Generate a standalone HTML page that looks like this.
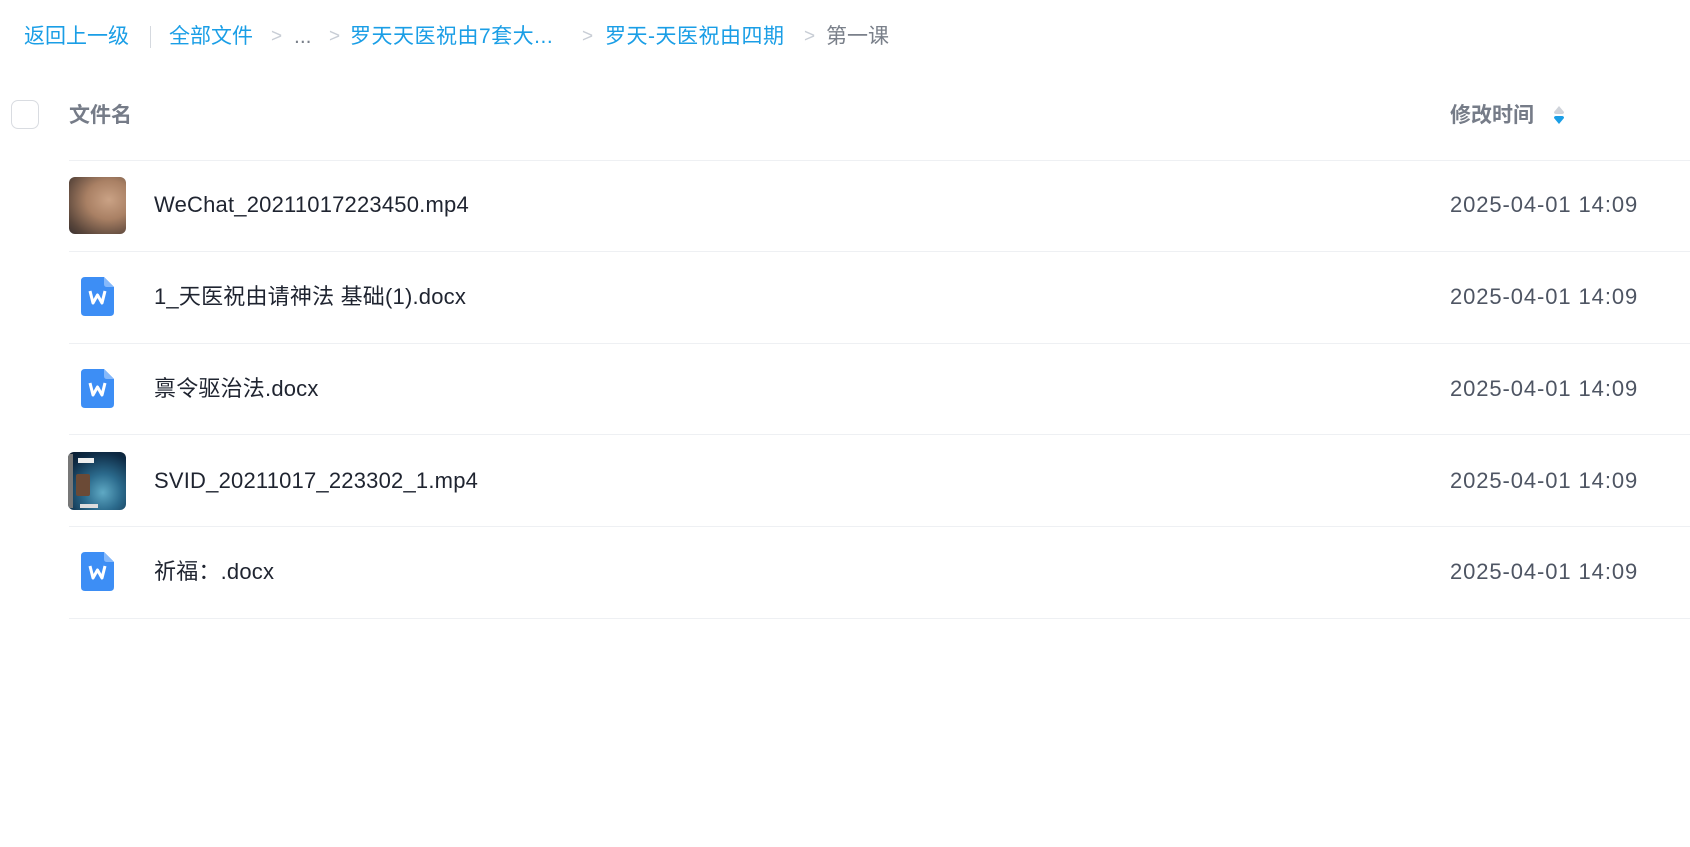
<!DOCTYPE html>
<html><head><meta charset="utf-8"><style>
*{margin:0;padding:0;box-sizing:border-box}
body{width:1690px;height:847px;background:#fff;font-family:"Liberation Sans","Noto Sans CJK SC",sans-serif;position:relative;overflow:hidden}
.a{position:absolute;white-space:nowrap}
.bc{top:23px;font-size:21px;line-height:28px;color:#1a9ee6}
.gt{color:#c8cdd5;font-size:19px}
.hd{font-size:21px;font-weight:bold;color:#767c88;top:103px;line-height:26px}
.line{position:absolute;left:69px;right:0;height:1px;background:#eef0f3}
.nm{left:154px;font-size:22px;letter-spacing:0.2px;color:#1f2430;line-height:28px}
.dt{left:1450px;font-size:22px;letter-spacing:0.9px;color:#4e5563;line-height:28px}
.doc{position:absolute;left:81px;width:33px;height:39px}
</style></head><body>
<div class="a bc" style="left:24px">返回上一级</div>
<div class="a" style="left:150px;top:26px;width:1px;height:22px;background:#d5d9df"></div>
<div class="a bc" style="left:169px">全部文件</div>
<div class="a bc gt" style="left:271px">&gt;</div>
<div class="a bc" style="left:294px;color:#7a808a">...</div>
<div class="a bc gt" style="left:329px">&gt;</div>
<div class="a bc" style="left:350px;letter-spacing:0.5px">罗天天医祝由7套大...</div>
<div class="a bc gt" style="left:582px">&gt;</div>
<div class="a bc" style="left:605px;letter-spacing:0.5px">罗天-天医祝由四期</div>
<div class="a bc gt" style="left:804px">&gt;</div>
<div class="a bc" style="left:826px;color:#7a808a">第一课</div>

<div class="a" style="left:11px;top:100px;width:28px;height:29px;border:1.5px solid #d9dce1;border-radius:7px"></div>
<div class="a hd" style="left:69px">文件名</div>
<div class="a hd" style="left:1450px">修改时间</div>
<svg class="a" style="left:1553px;top:104px" width="12" height="22" viewBox="0 0 12 22"><path d="M6 2 L11 8 Q11 10 9 10 L3 10 Q1 10 1 8 Z" fill="#cfd3da"/><path d="M6 20 L11 14 Q11 12 9 12 L3 12 Q1 12 1 14 Z" fill="#1a9ee6"/></svg>

<div class="line" style="top:160px"></div>
<div class="line" style="top:251px"></div>
<div class="line" style="top:343px"></div>
<div class="line" style="top:434px"></div>
<div class="line" style="top:526px"></div>
<div class="line" style="top:618px"></div>

<div class="a" style="left:69px;top:177px;width:57px;height:57px;border-radius:6px;background:radial-gradient(ellipse at 70% 40%,#caa285 0%,#a98064 40%,#5a463b 80%,#3a3130 100%)"></div>
<div class="a nm" style="top:191px">WeChat_20211017223450.mp4</div>
<div class="a dt" style="top:191px">2025-04-01 14:09</div>

<svg class="doc" style="top:277px" viewBox="0 0 33 39"><path d="M4 0 H23 L33 10 V35 Q33 39 29 39 H4 Q0 39 0 35 V4 Q0 0 4 0 Z" fill="#3d8ef5"/><path d="M23 0 L33 10 H26 Q23 10 23 7 Z" fill="#86b9fb"/><path d="M9 14 L12 26 L16.5 18 L21 26 L24 14" fill="none" stroke="#fff" stroke-width="3" stroke-linejoin="round"/></svg>
<div class="a nm" style="top:283px">1_天医祝由请神法 基础(1).docx</div>
<div class="a dt" style="top:283px">2025-04-01 14:09</div>

<svg class="doc" style="top:369px" viewBox="0 0 33 39"><path d="M4 0 H23 L33 10 V35 Q33 39 29 39 H4 Q0 39 0 35 V4 Q0 0 4 0 Z" fill="#3d8ef5"/><path d="M23 0 L33 10 H26 Q23 10 23 7 Z" fill="#86b9fb"/><path d="M9 14 L12 26 L16.5 18 L21 26 L24 14" fill="none" stroke="#fff" stroke-width="3" stroke-linejoin="round"/></svg>
<div class="a nm" style="top:375px">禀令驱治法.docx</div>
<div class="a dt" style="top:375px">2025-04-01 14:09</div>

<div class="a" style="left:68px;top:452px;width:58px;height:58px;border-radius:6px;overflow:hidden;background:radial-gradient(circle at 60% 70%,#5fa9c4 0%,#2b6a8c 35%,#0e2a44 75%,#0a1a2c 100%)">
<div style="position:absolute;left:8px;top:22px;width:14px;height:22px;background:#6b4a36;border-radius:2px"></div>
<div style="position:absolute;left:10px;top:6px;width:16px;height:5px;background:#eee"></div>
<div style="position:absolute;left:12px;top:52px;width:18px;height:4px;background:#ddd"></div>
<div style="position:absolute;left:0;top:2px;width:5px;height:54px;background:#777"></div>
</div>
<div class="a nm" style="top:467px">SVID_20211017_223302_1.mp4</div>
<div class="a dt" style="top:467px">2025-04-01 14:09</div>

<svg class="doc" style="top:552px" viewBox="0 0 33 39"><path d="M4 0 H23 L33 10 V35 Q33 39 29 39 H4 Q0 39 0 35 V4 Q0 0 4 0 Z" fill="#3d8ef5"/><path d="M23 0 L33 10 H26 Q23 10 23 7 Z" fill="#86b9fb"/><path d="M9 14 L12 26 L16.5 18 L21 26 L24 14" fill="none" stroke="#fff" stroke-width="3" stroke-linejoin="round"/></svg>
<div class="a nm" style="top:558px">祈福：.docx</div>
<div class="a dt" style="top:558px">2025-04-01 14:09</div>
</body></html>
